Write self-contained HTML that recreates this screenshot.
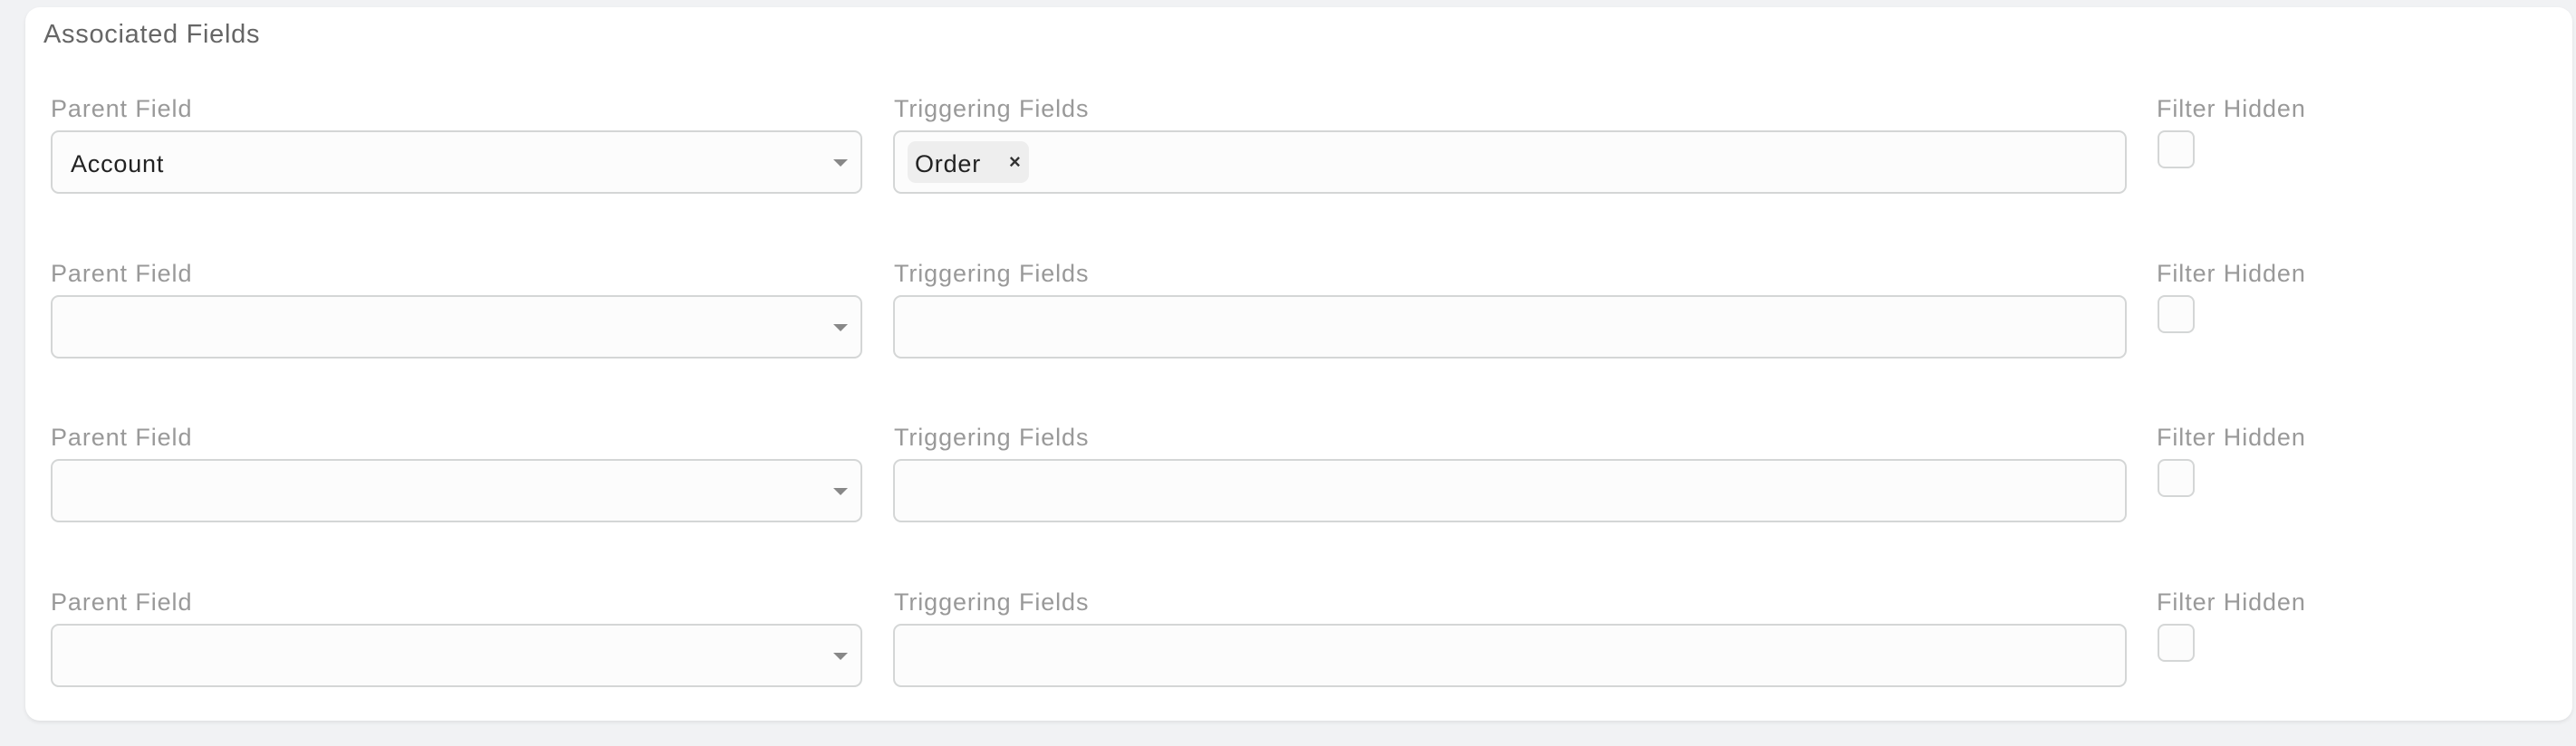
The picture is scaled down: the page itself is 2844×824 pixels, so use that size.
<!DOCTYPE html>
<html><head><style>
body{margin:0;width:2844px;height:824px;background:#f1f2f4;font-family:"Liberation Sans",sans-serif;position:relative;overflow:hidden}
.card{position:absolute;left:28px;top:8px;width:2812px;height:788px;background:#fff;border-radius:16px;box-shadow:0 2px 4px rgba(0,0,0,.08)}
.t{position:absolute;left:48px;top:22px;font-size:29px;color:#666;white-space:nowrap;letter-spacing:0.7px}
.lb{position:absolute;font-size:27px;color:#999;white-space:nowrap;letter-spacing:0.9px}
.box{position:absolute;height:66px;border:2px solid #d4d6d6;border-radius:9px;background:#fcfcfc;box-sizing:content-box}
.cb{position:absolute;left:2382px;width:37px;height:38px;border:2px solid #d4d6d6;border-radius:8px;background:#fcfcfc}
.arr{position:absolute;left:920px;width:0;height:0;border-left:8px solid transparent;border-right:8px solid transparent;border-top:8px solid #888}
.v{position:absolute;font-size:27px;color:#222;letter-spacing:0.8px}
</style></head><body>
<div class="card"></div>
<div class="t">Associated Fields</div>

<div class="lb" style="left:56px;top:105px">Parent Field</div>
<div class="lb" style="left:987px;top:105px">Triggering Fields</div>
<div class="lb" style="left:2381px;top:105px">Filter Hidden</div>
<div class="box" style="left:56px;top:144px;width:892px"></div>
<div class="v" style="left:78px;top:166px">Account</div>
<div class="arr" style="top:176px"></div>
<div class="box" style="left:986px;top:144px;width:1358px"></div>
<div style="position:absolute;left:1002px;top:156px;width:134px;height:46px;background:#eeeeee;border-radius:9px"></div>
<div class="v" style="left:1010px;top:166px">Order</div>
<div style="position:absolute;left:1114px;top:166px;font-size:22px;font-weight:bold;color:#333">×</div>
<div class="cb" style="top:144px"></div>

<div class="lb" style="left:56px;top:287px">Parent Field</div>
<div class="lb" style="left:987px;top:287px">Triggering Fields</div>
<div class="lb" style="left:2381px;top:287px">Filter Hidden</div>
<div class="box" style="left:56px;top:326px;width:892px"></div>
<div class="arr" style="top:358px"></div>
<div class="box" style="left:986px;top:326px;width:1358px"></div>
<div class="cb" style="top:326px"></div>

<div class="lb" style="left:56px;top:468px">Parent Field</div>
<div class="lb" style="left:987px;top:468px">Triggering Fields</div>
<div class="lb" style="left:2381px;top:468px">Filter Hidden</div>
<div class="box" style="left:56px;top:507px;width:892px"></div>
<div class="arr" style="top:539px"></div>
<div class="box" style="left:986px;top:507px;width:1358px"></div>
<div class="cb" style="top:507px"></div>

<div class="lb" style="left:56px;top:650px">Parent Field</div>
<div class="lb" style="left:987px;top:650px">Triggering Fields</div>
<div class="lb" style="left:2381px;top:650px">Filter Hidden</div>
<div class="box" style="left:56px;top:689px;width:892px"></div>
<div class="arr" style="top:721px"></div>
<div class="box" style="left:986px;top:689px;width:1358px"></div>
<div class="cb" style="top:689px"></div>
</body></html>
